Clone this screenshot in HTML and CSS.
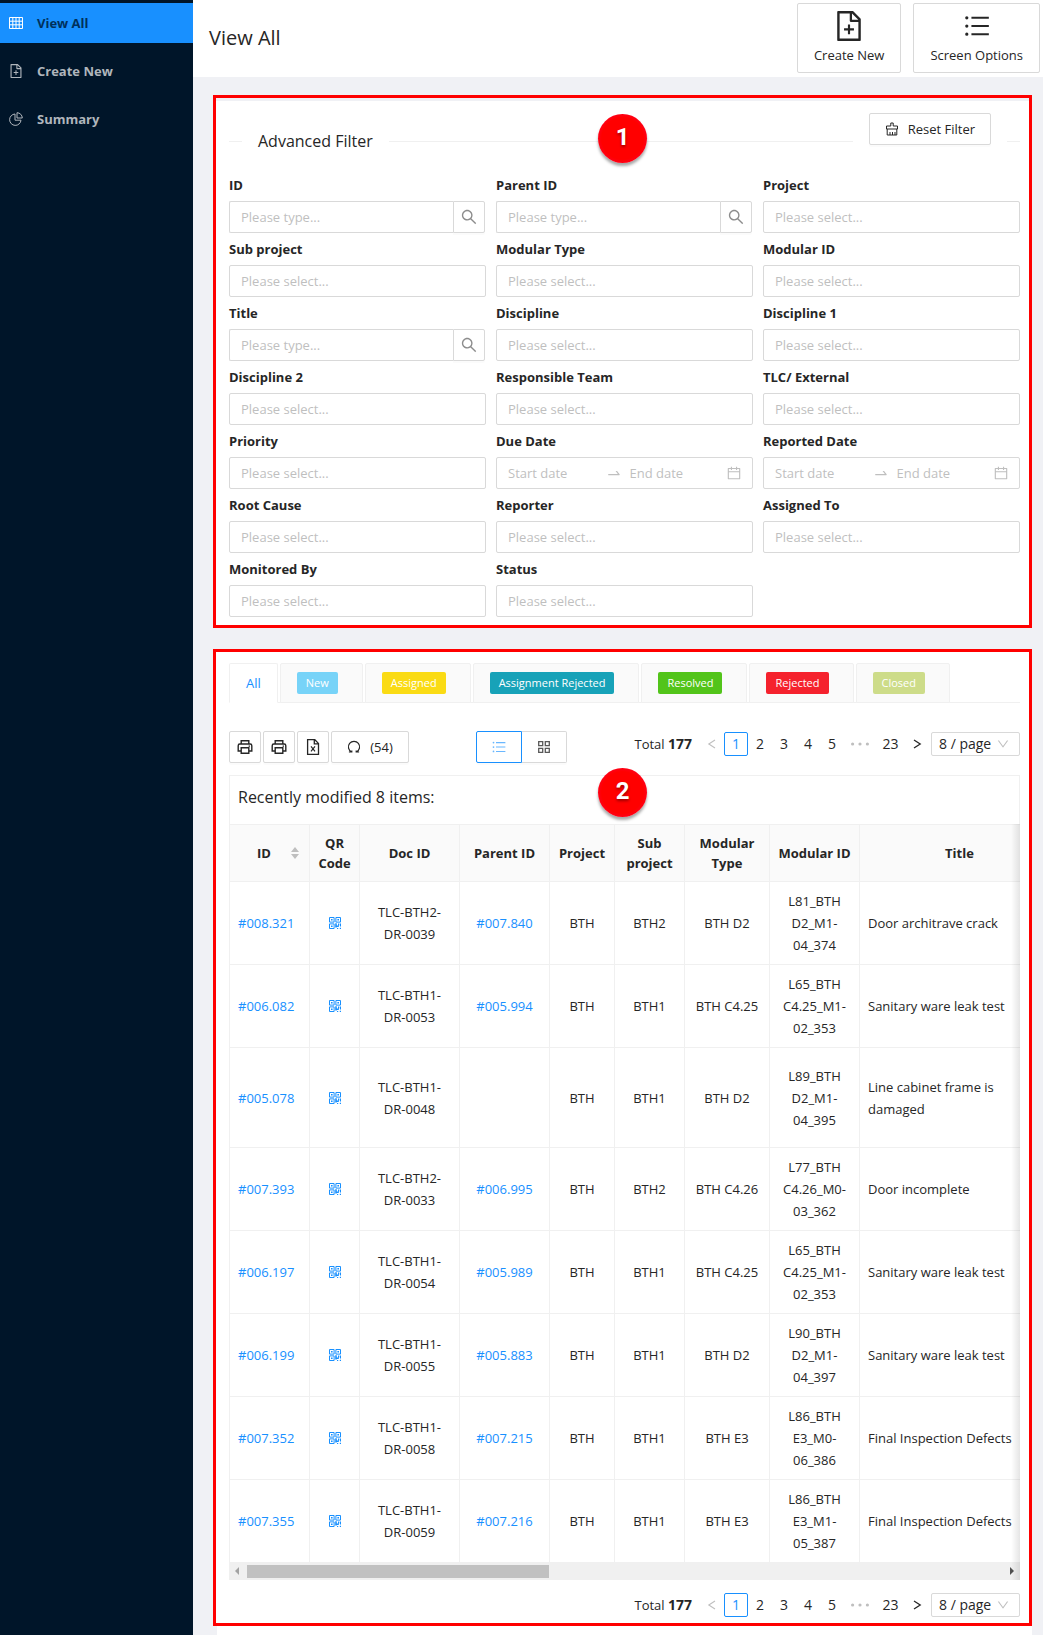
FILE: index.html
```html
<!DOCTYPE html>
<html lang="en">
<head>
  <meta charset="UTF-8">
  <meta name="viewport" content="width=device-width, initial-scale=1">
  <title>View All</title>
  <link rel="stylesheet" href="styles.css">
</head>
<body>
  <!-- Icon set -->
  <svg class="icon-set" aria-hidden="true">
    <symbol id="i-table" viewBox="0 0 14 14">
      <path d="M.5 1.5h13v11H.5zM.5 5.2h13M.5 8.8h13M3.8 1.5v11M7 1.5v11M10.2 1.5v11" fill="none" stroke="currentColor"/>
    </symbol>
    <symbol id="i-file-add" viewBox="64 64 896 896">
      <path fill="currentColor" d="M854.6 288.6L639.4 73.4c-6-6-14.1-9.4-22.6-9.4H192c-17.7 0-32 14.3-32 32v832c0 17.7 14.3 32 32 32h640c17.7 0 32-14.3 32-32V311.3c0-8.5-3.4-16.7-9.4-22.7zM790.2 326H602V137.8L790.2 326zm1.8 562H232V136h302v216a42 42 0 0042 42h216v494zM544 472c0-4.4-3.6-8-8-8h-48c-4.4 0-8 3.6-8 8v108H372c-4.4 0-8 3.6-8 8v48c0 4.4 3.6 8 8 8h108v108c0 4.4 3.6 8 8 8h48c4.4 0 8-3.6 8-8V644h108c4.4 0 8-3.6 8-8v-48c0-4.4-3.6-8-8-8H544V472z"/>
    </symbol>
    <symbol id="i-pie" viewBox="0 0 14 14">
      <path d="M6 2A5.7 5.7 0 1 0 12 8.2H6zM8 .7V6h5.3A5.4 5.4 0 0 0 8 .7z" fill="none" stroke="currentColor"/>
    </symbol>
    <symbol id="i-list" viewBox="64 64 896 896">
      <path fill="currentColor" d="M320 192h600v72H320zM320 476h600v72H320zM320 760h600v72H320zM104 228a56 56 0 10112 0 56 56 0 10-112 0zm0 284a56 56 0 10112 0 56 56 0 10-112 0zm0 284a56 56 0 10112 0 56 56 0 10-112 0z"/>
    </symbol>
    <symbol id="i-clear" viewBox="0 0 14 14">
      <path d="M5.8 4V1h2.4v3h4.3v3h-11V4zM2.2 7v6h9.6V7M5 13v-3M7.5 13v-3M10 13v-3" fill="none" stroke="currentColor"/>
    </symbol>
    <symbol id="i-search" viewBox="64 64 896 896">
      <path fill="currentColor" d="M909.6 854.5L649.9 594.8C690.2 542.7 712 479 712 412c0-80.2-31.3-155.4-87.9-212.1-56.6-56.7-132-87.9-212.1-87.9s-155.5 31.3-212.1 87.9C143.2 256.5 112 331.8 112 412c0 80.1 31.3 155.5 87.9 212.1C256.5 680.8 331.8 712 412 712c67 0 130.6-21.8 182.7-62l259.7 259.6a8.2 8.2 0 0011.6 0l43.6-43.5a8.2 8.2 0 000-11.6zM570.4 570.4C528 612.7 471.8 636 412 636s-116-23.3-158.4-65.6C211.3 528 188 471.8 188 412s23.3-116.1 65.6-158.4C296 211.3 352.2 188 412 188s116.1 23.2 158.4 65.6S636 352.2 636 412s-23.3 116.1-65.6 158.4z"/>
    </symbol>
    <symbol id="i-swap" viewBox="0 0 1024 1024">
      <path fill="currentColor" d="M873.1 596.2l-164-208A32 32 0 00684 376h-64.8c-6.7 0-10.4 7.7-6.3 13l144.3 183H152c-4.4 0-8 3.6-8 8v60c0 4.4 3.6 8 8 8h695.9c26.8 0 41.7-30.8 25.2-51.8z"/>
    </symbol>
    <symbol id="i-calendar" viewBox="64 64 896 896">
      <path fill="currentColor" d="M880 184H712v-64c0-4.4-3.6-8-8-8h-56c-4.4 0-8 3.6-8 8v64H384v-64c0-4.4-3.6-8-8-8h-56c-4.4 0-8 3.6-8 8v64H144c-17.7 0-32 14.3-32 32v664c0 17.7 14.3 32 32 32h736c17.7 0 32-14.3 32-32V216c0-17.7-14.3-32-32-32zm-40 656H184V460h656v380zM184 392V256h128v48c0 4.4 3.6 8 8 8h56c4.4 0 8-3.6 8-8v-48h256v48c0 4.4 3.6 8 8 8h56c4.4 0 8-3.6 8-8v-48h128v136H184z"/>
    </symbol>
    <symbol id="i-printer" viewBox="0 0 16 16">
      <path d="M4.2 5V1.7h7.6V5M4 12H1.2V6.7c0-1 .6-1.7 1.6-1.7h10.4c1 0 1.6.7 1.6 1.7V12H12M4.2 8.7h7.6v5.6H4.2z" fill="none" stroke="currentColor" stroke-width="1.4"/>
      <path d="M11.6 6.4h1.4v1.3h-1.4z" fill="currentColor"/>
    </symbol>
    <symbol id="i-excel" viewBox="0 0 16 16">
      <path d="M2.6.7h7.2l3.7 3.7v10.9H2.6zM9.3.9v4h4" fill="none" stroke="currentColor" stroke-width="1.3"/>
      <path d="M6 7.3l4 5M10 7.3l-4 5" fill="none" stroke="currentColor" stroke-width="1.2"/>
    </symbol>
    <symbol id="i-redo" viewBox="0 0 14 14">
      <path d="M4.6 12A5.6 5.6 0 1 1 9.4 12M1.9 12h2.9v-1.6M12.1 12H9.2v-1.6" fill="none" stroke="currentColor" stroke-width="1.2"/>
    </symbol>
    <symbol id="i-grid" viewBox="0 0 14 14">
      <path d="M1.7 1.7h4v4h-4zM8.3 1.7h4v4h-4zM1.7 8.3h4v4h-4zM8.3 8.3h4v4h-4z" fill="none" stroke="currentColor" stroke-width="1.3"/>
    </symbol>
    <symbol id="i-qr" viewBox="0 0 14 14">
      <path d="M1.5 1.5h4.6v4.6H1.5zM7.9 1.5h4.6v4.6H7.9zM1.5 7.9h4.6v4.6H1.5z" fill="none" stroke="currentColor"/>
      <path d="M3 3h1.6v1.6H3zM9.4 3H11v1.6H9.4zM3 9.4h1.6V11H3zM7.2 7.2h1.6v4.4H7.2zM8.8 9.6h2v1.4h-2zM10 7.4h1.3v2H10zM12 7.4h1v3h-1zM9 12h1.2v1H9zM11.8 11.8H13V13h-1.2z" fill="currentColor"/>
    </symbol>
    <symbol id="i-dots" viewBox="0 0 18 4">
      <path d="M0 2a1.6 1.6 0 1 0 3.2 0A1.6 1.6 0 1 0 0 2zM7.4 2a1.6 1.6 0 1 0 3.2 0 1.6 1.6 0 1 0-3.2 0zM14.8 2A1.6 1.6 0 1 0 18 2a1.6 1.6 0 1 0-3.2 0z" fill="currentColor"/>
    </symbol>
    <symbol id="i-left" viewBox="0 0 12 12">
      <path d="M9 2L2.8 6 9 10" fill="none" stroke="currentColor" stroke-width="1.1"/>
    </symbol>
    <symbol id="i-right" viewBox="0 0 12 12">
      <path d="M3 2l6.2 4L3 10" fill="none" stroke="currentColor" stroke-width="1.3"/>
    </symbol>
    <symbol id="i-down" viewBox="64 64 896 896">
      <path fill="currentColor" d="M884 256h-75c-5.1 0-9.9 2.5-12.9 6.6L512 654.2 227.9 262.6c-3-4.1-7.8-6.6-12.9-6.6h-75c-6.5 0-10.3 7.4-6.5 12.7l352.6 486.1c12.8 17.6 39 17.6 51.7 0l352.6-486.1c3.9-5.3.1-12.7-6.4-12.7z"/>
    </symbol>
    <symbol id="i-sorter" viewBox="0 0 10 12">
      <path d="M5 0l4 5H1zM5 12l4-5H1z" fill="currentColor"/>
    </symbol>
  </svg>

  <!-- Sidebar -->
  <nav class="sidebar">
    <a class="menu-item active" href="#"><svg class="icon"><use href="#i-table"/></svg>View All</a>
    <a class="menu-item" href="#"><svg class="icon"><use href="#i-file-add"/></svg>Create New</a>
    <a class="menu-item" href="#"><svg class="icon"><use href="#i-pie"/></svg>Summary</a>
  </nav>

  <div class="page">
    <!-- Header -->
    <header class="page-header">
      <h1>View All</h1>
      <button class="big-btn" type="button"><svg class="icon-lg"><use href="#i-file-add"/></svg>Create New</button>
      <button class="big-btn" type="button"><svg class="icon-lg icon-list"><use href="#i-list"/></svg>Screen Options</button>
    </header>

    <!-- Advanced Filter -->
    <section class="panel filter-panel">
      <span class="marker marker-filter">1</span>
      <div class="filter-head">
        <span class="line line-short"></span>
        <h2>Advanced Filter</h2>
        <span class="line line-long"></span>
        <button class="btn reset-btn" type="button"><svg class="icon"><use href="#i-clear"/></svg>Reset Filter</button>
        <span class="line line-short"></span>
      </div>

      <form class="filter-grid">
        <div class="field">
          <label for="f-id">ID</label>
          <div class="search">
            <input id="f-id" type="text" placeholder="Please type...">
            <button type="button" aria-label="Search"><svg class="icon"><use href="#i-search"/></svg></button>
          </div>
        </div>
        <div class="field">
          <label for="f-parent">Parent ID</label>
          <div class="search">
            <input id="f-parent" type="text" placeholder="Please type...">
            <button type="button" aria-label="Search"><svg class="icon"><use href="#i-search"/></svg></button>
          </div>
        </div>
        <div class="field">
          <label for="f-project">Project</label>
          <select id="f-project"><option>Please select...</option></select>
        </div>
        <div class="field">
          <label for="f-sub">Sub project</label>
          <select id="f-sub"><option>Please select...</option></select>
        </div>
        <div class="field">
          <label for="f-mtype">Modular Type</label>
          <select id="f-mtype"><option>Please select...</option></select>
        </div>
        <div class="field">
          <label for="f-mid">Modular ID</label>
          <select id="f-mid"><option>Please select...</option></select>
        </div>
        <div class="field">
          <label for="f-title">Title</label>
          <div class="search">
            <input id="f-title" type="text" placeholder="Please type...">
            <button type="button" aria-label="Search"><svg class="icon"><use href="#i-search"/></svg></button>
          </div>
        </div>
        <div class="field">
          <label for="f-disc">Discipline</label>
          <select id="f-disc"><option>Please select...</option></select>
        </div>
        <div class="field">
          <label for="f-disc1">Discipline 1</label>
          <select id="f-disc1"><option>Please select...</option></select>
        </div>
        <div class="field">
          <label for="f-disc2">Discipline 2</label>
          <select id="f-disc2"><option>Please select...</option></select>
        </div>
        <div class="field">
          <label for="f-team">Responsible Team</label>
          <select id="f-team"><option>Please select...</option></select>
        </div>
        <div class="field">
          <label for="f-tlc">TLC/ External</label>
          <select id="f-tlc"><option>Please select...</option></select>
        </div>
        <div class="field">
          <label for="f-priority">Priority</label>
          <select id="f-priority"><option>Please select...</option></select>
        </div>
        <div class="field">
          <label for="f-due">Due Date</label>
          <div class="range">
            <input id="f-due" type="text" placeholder="Start date">
            <svg class="icon-swap"><use href="#i-swap"/></svg>
            <input type="text" placeholder="End date" aria-label="Due date end">
            <svg class="icon"><use href="#i-calendar"/></svg>
          </div>
        </div>
        <div class="field">
          <label for="f-reported">Reported Date</label>
          <div class="range">
            <input id="f-reported" type="text" placeholder="Start date">
            <svg class="icon-swap"><use href="#i-swap"/></svg>
            <input type="text" placeholder="End date" aria-label="Reported date end">
            <svg class="icon"><use href="#i-calendar"/></svg>
          </div>
        </div>
        <div class="field">
          <label for="f-root">Root Cause</label>
          <select id="f-root"><option>Please select...</option></select>
        </div>
        <div class="field">
          <label for="f-reporter">Reporter</label>
          <select id="f-reporter"><option>Please select...</option></select>
        </div>
        <div class="field">
          <label for="f-assigned">Assigned To</label>
          <select id="f-assigned"><option>Please select...</option></select>
        </div>
        <div class="field">
          <label for="f-monitored">Monitored By</label>
          <select id="f-monitored"><option>Please select...</option></select>
        </div>
        <div class="field">
          <label for="f-status">Status</label>
          <select id="f-status"><option>Please select...</option></select>
        </div>
      </form>
    </section>

    <!-- Results -->
    <section class="panel list-panel">
      <span class="marker marker-list">2</span>

      <div class="tabs">
        <button class="tab active" type="button">All</button>
        <button class="tab" type="button"><span class="tag tag-new">New</span></button>
        <button class="tab" type="button"><span class="tag tag-assigned">Assigned</span></button>
        <button class="tab" type="button"><span class="tag tag-assign-rejected">Assignment Rejected</span></button>
        <button class="tab" type="button"><span class="tag tag-resolved">Resolved</span></button>
        <button class="tab" type="button"><span class="tag tag-rejected">Rejected</span></button>
        <button class="tab" type="button"><span class="tag tag-closed">Closed</span></button>
      </div>

      <div class="toolbar">
        <div class="actions">
          <button class="btn icon-btn" type="button" aria-label="Print"><svg class="icon-md"><use href="#i-printer"/></svg></button>
          <button class="btn icon-btn" type="button" aria-label="Print all"><svg class="icon-md"><use href="#i-printer"/></svg></button>
          <button class="btn icon-btn" type="button" aria-label="Export"><svg class="icon-md"><use href="#i-excel"/></svg></button>
          <button class="btn reload-btn" type="button"><svg class="icon"><use href="#i-redo"/></svg>(54)</button>
        </div>
        <div class="view-switch">
          <button class="btn view-btn selected" type="button" aria-label="List view"><svg class="icon"><use href="#i-list"/></svg></button>
          <button class="btn view-btn" type="button" aria-label="Grid view"><svg class="icon"><use href="#i-grid"/></svg></button>
        </div>
        <div class="pagination">
          <span class="total">Total <b>177</b></span>
          <button class="page-btn disabled" type="button" aria-label="Previous"><svg class="icon-sm"><use href="#i-left"/></svg></button>
          <button class="page-btn current" type="button">1</button>
          <button class="page-btn" type="button">2</button>
          <button class="page-btn" type="button">3</button>
          <button class="page-btn" type="button">4</button>
          <button class="page-btn" type="button">5</button>
          <svg class="dots"><use href="#i-dots"/></svg>
          <button class="page-btn last" type="button">23</button>
          <button class="page-btn" type="button" aria-label="Next"><svg class="icon-sm"><use href="#i-right"/></svg></button>
          <span class="page-size">
            <select aria-label="Page size"><option>8 / page</option></select>
            <svg class="icon-sm"><use href="#i-down"/></svg>
          </span>
        </div>
      </div>

      <div class="table-card">
        <div class="table-title">Recently modified 8 items:</div>
        <div class="table-wrap">
          <table>
            <colgroup>
              <col class="c-id"><col class="c-qr"><col class="c-doc"><col class="c-parent"><col class="c-project">
              <col class="c-sub"><col class="c-type"><col class="c-mid"><col class="c-title">
            </colgroup>
            <thead>
              <tr>
                <th><span class="sortable">ID<svg class="icon-sorter"><use href="#i-sorter"/></svg></span></th>
                <th>QR Code</th>
                <th>Doc ID</th>
                <th>Parent ID</th>
                <th>Project</th>
                <th>Sub project</th>
                <th>Modular Type</th>
                <th>Modular ID</th>
                <th>Title</th>
              </tr>
            </thead>
            <tbody>
              <tr>
                <td><a href="#">#008.321</a></td>
                <td><a href="#" aria-label="QR code"><svg class="icon"><use href="#i-qr"/></svg></a></td>
                <td>TLC-BTH2-<br>DR-0039</td>
                <td><a href="#">#007.840</a></td>
                <td>BTH</td>
                <td>BTH2</td>
                <td>BTH D2</td>
                <td>L81_BTH<br>D2_M1-<br>04_374</td>
                <td>Door architrave crack</td>
              </tr>
              <tr>
                <td><a href="#">#006.082</a></td>
                <td><a href="#" aria-label="QR code"><svg class="icon"><use href="#i-qr"/></svg></a></td>
                <td>TLC-BTH1-<br>DR-0053</td>
                <td><a href="#">#005.994</a></td>
                <td>BTH</td>
                <td>BTH1</td>
                <td>BTH C4.25</td>
                <td>L65_BTH<br>C4.25_M1-<br>02_353</td>
                <td>Sanitary ware leak test</td>
              </tr>
              <tr class="tall">
                <td><a href="#">#005.078</a></td>
                <td><a href="#" aria-label="QR code"><svg class="icon"><use href="#i-qr"/></svg></a></td>
                <td>TLC-BTH1-<br>DR-0048</td>
                <td></td>
                <td>BTH</td>
                <td>BTH1</td>
                <td>BTH D2</td>
                <td>L89_BTH<br>D2_M1-<br>04_395</td>
                <td>Line cabinet frame is<br>damaged</td>
              </tr>
              <tr>
                <td><a href="#">#007.393</a></td>
                <td><a href="#" aria-label="QR code"><svg class="icon"><use href="#i-qr"/></svg></a></td>
                <td>TLC-BTH2-<br>DR-0033</td>
                <td><a href="#">#006.995</a></td>
                <td>BTH</td>
                <td>BTH2</td>
                <td>BTH C4.26</td>
                <td>L77_BTH<br>C4.26_M0-<br>03_362</td>
                <td>Door incomplete</td>
              </tr>
              <tr>
                <td><a href="#">#006.197</a></td>
                <td><a href="#" aria-label="QR code"><svg class="icon"><use href="#i-qr"/></svg></a></td>
                <td>TLC-BTH1-<br>DR-0054</td>
                <td><a href="#">#005.989</a></td>
                <td>BTH</td>
                <td>BTH1</td>
                <td>BTH C4.25</td>
                <td>L65_BTH<br>C4.25_M1-<br>02_353</td>
                <td>Sanitary ware leak test</td>
              </tr>
              <tr>
                <td><a href="#">#006.199</a></td>
                <td><a href="#" aria-label="QR code"><svg class="icon"><use href="#i-qr"/></svg></a></td>
                <td>TLC-BTH1-<br>DR-0055</td>
                <td><a href="#">#005.883</a></td>
                <td>BTH</td>
                <td>BTH1</td>
                <td>BTH D2</td>
                <td>L90_BTH<br>D2_M1-<br>04_397</td>
                <td>Sanitary ware leak test</td>
              </tr>
              <tr>
                <td><a href="#">#007.352</a></td>
                <td><a href="#" aria-label="QR code"><svg class="icon"><use href="#i-qr"/></svg></a></td>
                <td>TLC-BTH1-<br>DR-0058</td>
                <td><a href="#">#007.215</a></td>
                <td>BTH</td>
                <td>BTH1</td>
                <td>BTH E3</td>
                <td>L86_BTH<br>E3_M0-<br>06_386</td>
                <td>Final Inspection Defects</td>
              </tr>
              <tr>
                <td><a href="#">#007.355</a></td>
                <td><a href="#" aria-label="QR code"><svg class="icon"><use href="#i-qr"/></svg></a></td>
                <td>TLC-BTH1-<br>DR-0059</td>
                <td><a href="#">#007.216</a></td>
                <td>BTH</td>
                <td>BTH1</td>
                <td>BTH E3</td>
                <td>L86_BTH<br>E3_M1-<br>05_387</td>
                <td>Final Inspection Defects</td>
              </tr>
            </tbody>
          </table>
        </div>
        <div class="scrollbar">
          <span class="arrow arrow-left"></span>
          <span class="track"><span class="thumb"></span></span>
          <span class="arrow arrow-right"></span>
        </div>
      </div>

      <div class="pagination pagination-bottom">
        <span class="total">Total <b>177</b></span>
        <button class="page-btn disabled" type="button" aria-label="Previous"><svg class="icon-sm"><use href="#i-left"/></svg></button>
        <button class="page-btn current" type="button">1</button>
        <button class="page-btn" type="button">2</button>
        <button class="page-btn" type="button">3</button>
        <button class="page-btn" type="button">4</button>
        <button class="page-btn" type="button">5</button>
        <svg class="dots"><use href="#i-dots"/></svg>
        <button class="page-btn last" type="button">23</button>
        <button class="page-btn" type="button" aria-label="Next"><svg class="icon-sm"><use href="#i-right"/></svg></button>
        <span class="page-size">
          <select aria-label="Page size"><option>8 / page</option></select>
          <svg class="icon-sm"><use href="#i-down"/></svg>
        </span>
      </div>
    </section>
    <div class="page-end"></div>
  </div>
</body>
</html>
```
FILE: styles.css
```css
* {
  box-sizing: border-box;
}

body {
  margin: 0;
  display: flex;
  min-height: 100vh;
  font-family: "Open Sans", "Noto Sans", sans-serif;
  font-size: 13px;
  line-height: 22px;
  color: #262626;
  background: #f0f1f5;
}

button,
input,
select {
  font: inherit;
  color: inherit;
  margin: 0;
}

button {
  cursor: pointer;
}

a {
  color: #1890ff;
  text-decoration: none;
}

svg {
  display: block;
  flex: none;
}

.icon-set {
  display: none;
}

.icon {
  width: 14px;
  height: 14px;
}

.icon-sm {
  width: 12px;
  height: 12px;
}

.icon-md {
  width: 16px;
  height: 16px;
}

.icon-lg {
  width: 30px;
  height: 30px;
}

.icon-list {
  padding: 2px;
}

/* Sidebar */
.sidebar {
  flex: none;
  width: 193px;
  padding-top: 3px;
  background: #001529;
}

.menu-item {
  display: flex;
  align-items: center;
  gap: 14px;
  height: 40px;
  margin-bottom: 8px;
  padding: 0 9px;
  font-weight: bold;
  color: #b0b6bc;
}

.menu-item.active {
  background: #1890ff;
  color: #00305c;
}

.menu-item.active .icon {
  color: #fff;
}

.page {
  flex: 1;
  min-width: 0;
  display: flex;
  flex-direction: column;
}

/* Header */
.page-header {
  display: flex;
  align-items: flex-start;
  gap: 12px;
  padding: 3px 3px 4px 16px;
  background: #fff;
}

.page-header h1 {
  flex: 1;
  margin: 0;
  font-size: 20px;
  font-weight: 500;
  line-height: 70px;
}

.big-btn {
  display: flex;
  flex-direction: column;
  align-items: center;
  gap: 3px;
  height: 70px;
  padding: 7px 16px 0;
  background: #fff;
  border: 1px solid #d9d9d9;
  border-radius: 2px;
}

/* Panels */
.panel {
  position: relative;
  margin: 0 11px 0 20px;
  padding: 0 9px 0 13px;
  background: #fff;
  border: 3px solid #f00;
}

.filter-panel {
  margin-top: 18px;
  padding-bottom: 8px;
  box-shadow: inset 0 3px #f0f1f5;
}

.list-panel {
  margin-top: 21px;
  padding-top: 11px;
  padding-bottom: 6px;
}

.page-end {
  flex: 1;
  margin: 0 11px 0 24px;
  background: #fff;
}

.marker {
  position: absolute;
  z-index: 1;
  left: 47%;
  width: 49px;
  height: 49px;
  border-radius: 50%;
  background: radial-gradient(circle, #f00 60%, #ff0015 70%);
  box-shadow: 0 3px 3px rgba(0, 0, 0, 0.35);
  color: #fff;
  font-family: Roboto, sans-serif;
  font-size: 24px;
  font-weight: bold;
  line-height: 46px;
  text-align: center;
  text-shadow: 0 2px 3px rgba(0, 0, 0, 0.4);
}

.marker-filter {
  top: 16px;
}

.marker-list {
  top: 116px;
}

/* Filter */
.filter-head {
  display: flex;
  align-items: center;
  gap: 16px;
  height: 71px;
  padding-top: 15px;
}

.filter-head h2 {
  margin: 0;
  font-size: 16px;
  font-weight: 500;
  line-height: 24px;
}

.line {
  height: 1px;
  background: #f0f0f0;
}

.line-short {
  width: 13px;
}

.line-long {
  flex: 1;
}

.btn {
  display: flex;
  align-items: center;
  justify-content: center;
  height: 32px;
  padding: 0;
  background: #fff;
  border: 1px solid #d9d9d9;
  border-radius: 2px;
  box-shadow: 0 2px 0 rgba(0, 0, 0, 0.015);
}

.reset-btn {
  align-self: flex-start;
  gap: 9px;
  padding: 0 15px;
}

.filter-grid {
  display: grid;
  grid-template-columns: repeat(3, 1fr);
  column-gap: 10px;
}

.field {
  min-width: 0;
}

.field label {
  display: block;
  font-weight: bold;
  line-height: 32px;
}

.field input,
.field select {
  width: 100%;
  height: 32px;
  padding: 0 11px;
  background: #fff;
  border: 1px solid #d9d9d9;
  border-radius: 2px;
}

.field select {
  display: block;
  appearance: none;
  color: #bfbfbf;
}

.field input::placeholder {
  color: #bfbfbf;
  opacity: 1;
}

.search {
  display: flex;
  padding-right: 1px;
}

.search input {
  flex: 1;
  min-width: 0;
  border-right: 0;
  border-radius: 2px 0 0 2px;
}

.search button {
  width: 32px;
  height: 32px;
  padding: 0 7px;
  background: #fff;
  border: 1px solid #d9d9d9;
  border-radius: 0 2px 2px 0;
  box-shadow: 0 2px 0 rgba(0, 0, 0, 0.015);
  color: #8c8c8c;
}

.range {
  display: flex;
  align-items: center;
  height: 32px;
  padding: 0 11px;
  border: 1px solid #d9d9d9;
  border-radius: 2px;
  color: #bfbfbf;
}

.range .icon-swap {
  width: 16px;
  height: 16px;
  margin-right: 8px;
}

.range input {
  flex: 1;
  min-width: 0;
  height: 30px;
  padding: 0;
  border: 0;
}

.search .icon {
  width: 16px;
  height: 16px;
}

/* Tabs */
.tabs {
  display: flex;
  gap: 2px;
  border-bottom: 1px solid #f0f0f0;
}

.tab {
  height: 40px;
  margin-bottom: -1px;
  padding: 0 24px 0 16px;
  background: #fafafa;
  border: 1px solid #f0f0f0;
  border-radius: 2px 2px 0 0;
}

.tab.active {
  padding: 0 16px;
  background: #fff;
  border-bottom-color: #fff;
  color: #1890ff;
  font-weight: 500;
}

.tag {
  display: block;
  padding: 0 9px;
  border-radius: 2px;
  color: #fff;
  font-size: 11px;
  line-height: 22px;
}

.tag-new {
  background: #77d3f8;
}

.tag-assigned {
  background: #fadb14;
}

.tag-assign-rejected {
  background: #17a2b8;
}

.tag-resolved {
  background: #52c41a;
}

.tag-rejected {
  background: #f5222d;
}

.tag-closed {
  background: #cddc89;
}

/* Toolbar */
.toolbar {
  display: flex;
  align-items: flex-start;
  justify-content: space-between;
  padding: 28px 0 12px;
}

.actions {
  display: flex;
  gap: 2px;
}

.icon-btn {
  width: 32px;
}

.reload-btn {
  gap: 9px;
  width: 78px;
}

.view-switch {
  display: flex;
}

.view-btn {
  width: 45px;
  border-left: 0;
  border-radius: 0 2px 2px 0;
  color: #595959;
}

.view-btn.selected {
  width: 46px;
  border: 1px solid #1890ff;
  border-radius: 2px 0 0 2px;
  color: #69b7ff;
}

.pagination {
  display: flex;
  align-items: center;
  justify-content: flex-end;
  padding-top: 1px;
  font-size: 14px;
  line-height: 24px;
}

.pagination-bottom {
  padding-top: 13px;
}

.total {
  margin-right: 8px;
  font-size: 13px;
}

.total b {
  font-size: 14px;
}

.page-btn {
  display: flex;
  align-items: center;
  justify-content: center;
  width: 24px;
  height: 24px;
  padding: 0;
  background: none;
  border: 1px solid transparent;
  border-radius: 2px;
}

.page-btn.current {
  border-color: #1890ff;
  color: #1890ff;
}

.page-btn.disabled {
  color: #bfbfbf;
}

.page-btn.last {
  width: 29px;
}

.dots {
  width: 18px;
  height: 4px;
  margin: 0 7px;
  color: #bfbfbf;
}

.page-size {
  position: relative;
  margin-left: 2px;
}

.page-size select {
  display: block;
  width: 89px;
  height: 24px;
  padding: 0 7px 1px;
  appearance: none;
  background: #fff;
  border: 1px solid #d9d9d9;
  border-radius: 2px;
  line-height: 20px;
}

.page-size .icon-sm {
  position: absolute;
  top: 6px;
  right: 11px;
  color: #bfbfbf;
  pointer-events: none;
}

/* Table */
.table-card {
  position: relative;
  border-top: 1px solid #f0f0f0;
}

.table-title {
  height: 48px;
  padding: 9px 8px;
  border: solid #f0f0f0;
  border-width: 0 1px;
  font-size: 16px;
  line-height: 24px;
}

.table-wrap {
  overflow: hidden;
  border-left: 1px solid #f0f0f0;
}

/* Shade over the cut edge of the table */
.table-card::after {
  content: "";
  position: absolute;
  top: 48px;
  right: 0;
  bottom: 0;
  width: 9px;
  background: linear-gradient(to left, rgba(0, 0, 0, 0.1), rgba(0, 0, 0, 0));
}

table {
  width: 830px;
  table-layout: fixed;
  border-collapse: separate;
  border-spacing: 0;
}

.c-id { width: 80px; }
.c-qr { width: 50px; }
.c-doc { width: 100px; }
.c-parent { width: 90px; }
.c-project { width: 65px; }
.c-sub { width: 70px; }
.c-type { width: 85px; }
.c-mid { width: 90px; }
.c-title { width: 200px; }

th,
td {
  padding: 8px;
  border-right: 1px solid #f0f0f0;
  border-bottom: 1px solid #f0f0f0;
  text-align: center;
}

th {
  padding: 8px 4px;
  background: #fafafa;
  border-top: 1px solid #f0f0f0;
  font-weight: bold;
  line-height: 20px;
}

td:first-child,
td:last-child {
  text-align: left;
}

td .icon {
  margin: 0 auto;
}

.tall td {
  height: 100px;
}

tbody tr:last-child td {
  border-bottom: 0;
}

.sortable {
  display: flex;
  align-items: center;
  justify-content: flex-end;
  gap: 19px;
  padding-right: 5px;
}

.icon-sorter {
  width: 10px;
  height: 12px;
  color: #bfbfbf;
}

.scrollbar {
  display: flex;
  align-items: center;
  height: 18px;
  padding: 0 6px;
  background: #f0f0f0;
}

.track {
  flex: 1;
  height: 13px;
  margin: 0 8px;
}

.thumb {
  display: block;
  width: 40%;
  height: 13px;
  background: #c1c1c1;
}

.arrow {
  border: 4px solid transparent;
}

.arrow-left {
  border-left: 0;
  border-right-color: #a3a3a3;
}

.arrow-right {
  border-right: 0;
  border-left-color: #505050;
}
```
